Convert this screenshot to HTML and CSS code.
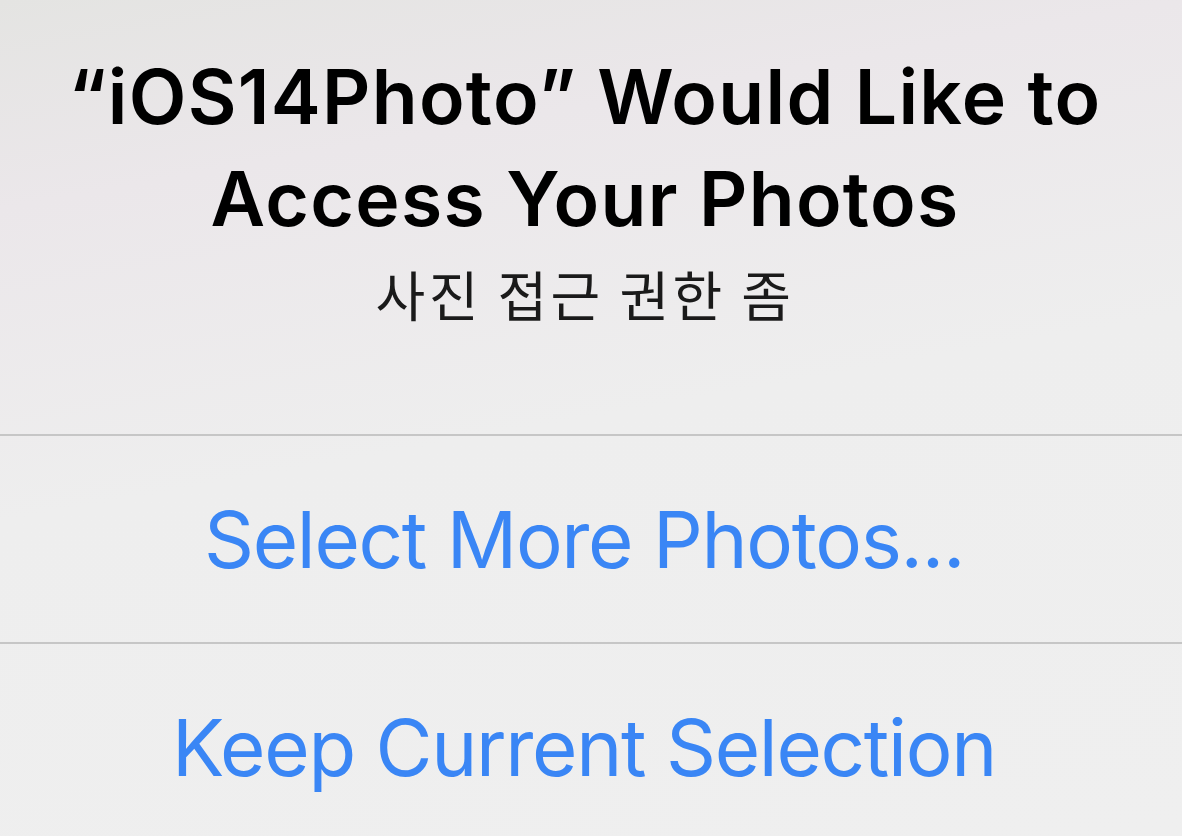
FILE: index.html
```html
<!DOCTYPE html>
<html>
<head>
  <title>Photo Access Alert</title>
  <link rel="stylesheet" href="styles.css">
</head>
<body>
  <div class="alert">
    <div class="alert-header">
      <h1 class="alert-title">“iOS14Photo” Would Like to<br>Access Your Photos</h1>
      <p class="alert-message">사진 접근 권한 좀</p>
    </div>
    <div class="alert-actions">
      <button class="action">Select More Photos...</button>
      <button class="action">Keep Current Selection</button>
    </div>
  </div>
</body>
</html>
```

FILE: styles.css
```css
/* Alert de permissão de fotos */
html, body {
  margin: 0;
  height: 100%;
}

body {
  font-family: Inter, "Noto Sans CJK KR", sans-serif;
  background: linear-gradient(170deg, #e4e4e2 0%, #ebe7ea 20%, #eeeeee 50%, #efefef 100%);
  overflow: hidden;
}

.alert {
  width: 100%;
}

.alert-header {
  padding: 46px 12px 0 0;
  height: 434px;
  box-sizing: border-box;
  text-align: center;
}

.alert-title {
  margin: 0;
  font-size: 75px;
  line-height: 102px;
  font-weight: 600;
  color: #000;
  letter-spacing: 1.3px;
}

.alert-message {
  margin: 4px 0 0;
  font-family: "Noto Sans CJK KR", sans-serif;
  font-size: 54px;
  line-height: 80px;
  color: #1a1a1a;
  letter-spacing: 3.5px;
}

.alert-actions {
  display: flex;
  flex-direction: column;
}

.action {
  height: 208px;
  border: none;
  border-top: 2px solid #c6c6c6;
  background: transparent;
  font-family: Inter, sans-serif;
  font-size: 78px;
  font-weight: 400;
  color: #3a86f5;
  letter-spacing: -1.3px;
  padding: 0 14px 0 0;
  cursor: pointer;
}
```
